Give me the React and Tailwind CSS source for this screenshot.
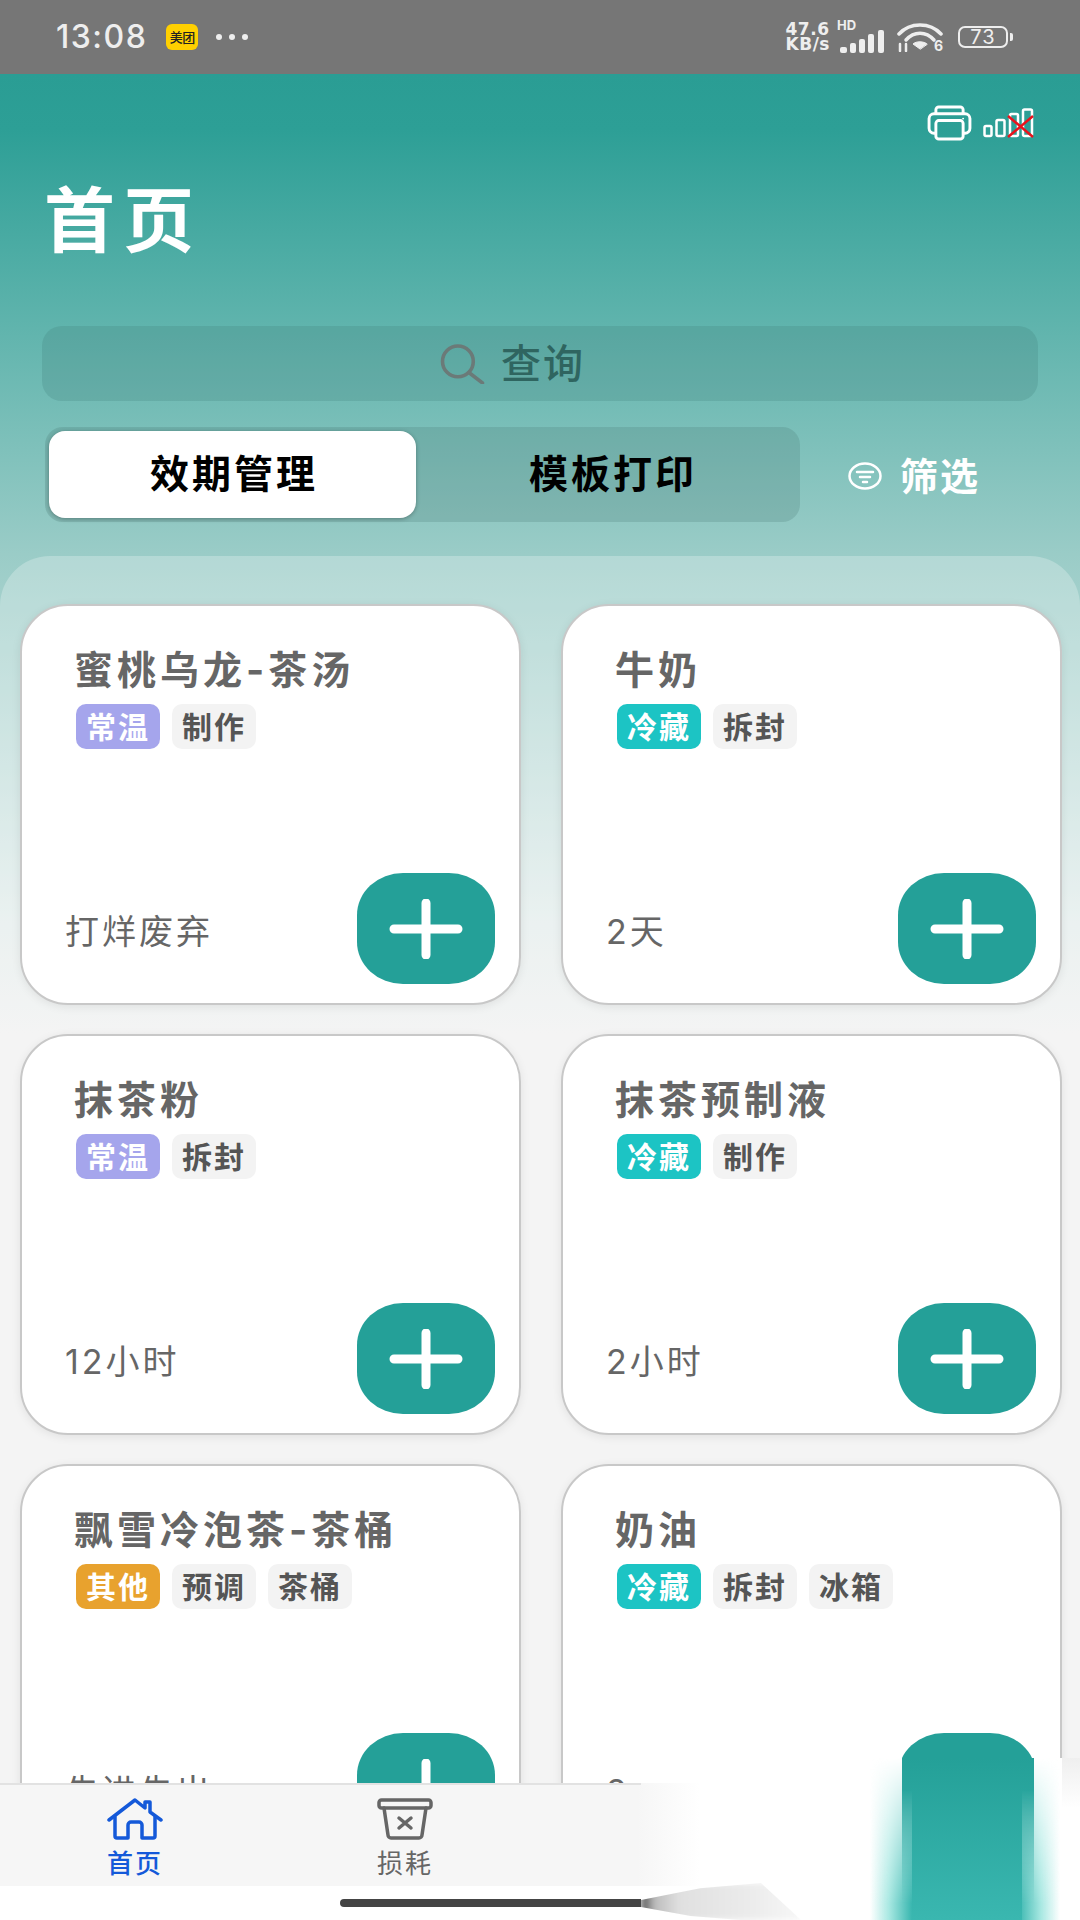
import React from 'react';

const FONT = "font-['Inter','Noto_Sans_CJK_SC',sans-serif]";

const cards = [
  { name: '蜜桃乌龙-茶汤', temp: '常温', tags: ['制作'], time: '打烊废弃' },
  { name: '牛奶', temp: '冷藏', tags: ['拆封'], time: '2天' },
  { name: '抹茶粉', temp: '常温', tags: ['拆封'], time: '12小时' },
  { name: '抹茶预制液', temp: '冷藏', tags: ['制作'], time: '2小时' },
  { name: '飘雪冷泡茶-茶桶', temp: '其他', tags: ['预调', '茶桶'], time: '先进先出' },
  { name: '奶油', temp: '冷藏', tags: ['拆封', '冰箱'], time: '2小时' },
];

const TEMP_COLORS = {
  常温: 'bg-[#a5a5ec]',
  冷藏: 'bg-[#1cc4c4]',
  其他: 'bg-[#e8a22e]',
};

function Tag({ children, className }) {
  return (
    <span className={`flex h-[45px] w-[84px] items-center justify-center rounded-[10px] text-[30px] font-bold leading-none tracking-[2px] ${className}`}>
      {children}
    </span>
  );
}

function Card({ card }) {
  return (
    <div className="flex h-[401px] w-[501px] flex-col rounded-[48px] border-2 border-[#c8c8c8] bg-white pl-[44px] pr-[24px] pt-[44px] shadow-[0_2px_10px_rgba(0,0,0,0.08)]">
      <div className="pl-[8px] text-[39px] font-bold leading-[40px] tracking-[4px] text-[#666666]">{card.name}</div>
      <div className="mt-[14px] flex gap-[12px] pl-[10px]">
        <Tag className={`text-white ${TEMP_COLORS[card.temp]}`}>{card.temp}</Tag>
        {card.tags.map((tag) => (
          <Tag key={tag} className="bg-[#f3f3f3] text-[#555555]">{tag}</Tag>
        ))}
      </div>
      <div className="mt-[124px] flex items-start justify-between">
        <span className="-ml-[1px] pt-[39px] text-[34px] leading-[40px] tracking-[3px] text-[#666666]">{card.time}</span>
        <button className="flex h-[111px] w-[138px] items-center justify-center rounded-[46px/42px] bg-[#24a098]">
          <svg width="74" height="60" viewBox="0 0 74 60" fill="none" stroke="white" strokeWidth="9" strokeLinecap="round">
            <path d="M5 30H69M37 4V56" />
          </svg>
        </button>
      </div>
    </div>
  );
}

function StatusBar() {
  return (
    <div className="flex h-[74px] items-center justify-between bg-[#767676] pl-[56px] pr-[72px] text-[#eeeeee]">
      <div className="flex items-center">
        <span className="text-[32px] font-medium leading-none tracking-[1.5px]">13:08</span>
        <span className="ml-[19px] flex h-[26px] w-[32px] items-center justify-center rounded-[6px] bg-[#ffd000] text-[13px] font-medium leading-none tracking-[-0.5px] text-[#222222]">美团</span>
        <span className="ml-[18px] flex gap-[7px]">
          <i className="h-[6px] w-[6px] rounded-full bg-[#eeeeee]" />
          <i className="h-[6px] w-[6px] rounded-full bg-[#eeeeee]" />
          <i className="h-[6px] w-[6px] rounded-full bg-[#eeeeee]" />
        </span>
      </div>
      <div className="flex items-center">
        <span className="font-['DejaVu_Sans',sans-serif] text-[17px] font-bold leading-[15px] tracking-[0.5px]">47.6<br />KB/s</span>
        <div className="relative ml-[7px] h-[30px] w-[48px]">
          <span className="absolute left-0 top-[-3px] text-[13px] font-bold leading-none">HD</span>
          <svg className="absolute bottom-[-2px] left-0" width="48" height="24" viewBox="0 0 48 24" fill="#eeeeee">
            <rect x="3" y="17" width="7" height="6" rx="2" />
            <rect x="13" y="13" width="6" height="10" rx="2" />
            <rect x="22" y="9" width="6" height="14" rx="2" />
            <rect x="31" y="4" width="6" height="19" rx="2" />
            <rect x="41" y="0" width="6" height="23" rx="2" />
          </svg>
        </div>
        <div className="relative ml-[12px] h-[30px] w-[46px]">
          <svg width="46" height="30" viewBox="0 0 46 30" fill="none" stroke="#eeeeee" strokeWidth="3.5" strokeLinecap="round">
            <path d="M2 12C13 0 33 0 44 12" />
            <path d="M9 18C17 9 29 9 37 18" />
            <path d="M23 27l-7-5c3-3 11-3 14 0z" fill="#eeeeee" strokeWidth="1" />
            <path d="M3 22v7M9 29v-7" strokeWidth="2.5" />
          </svg>
          <span className="absolute right-0 top-[17px] text-[14px] font-bold leading-none">6</span>
        </div>
        <div className="relative ml-[15px] flex h-[22px] w-[50px] items-center justify-center rounded-[7px] border-2 border-[#eeeeee] text-[20px] leading-none tracking-[1px]">
          73
          <i className="absolute right-[-7px] top-[5px] h-[8px] w-[3px] rounded-r-[2px] bg-[#eeeeee]" />
        </div>
      </div>
    </div>
  );
}

function Header() {
  return (
    <div className="relative px-[42px]">
      <div className="absolute right-[46px] top-[31px] flex items-end gap-[11px]">
        <svg width="45" height="36" viewBox="0 0 46 37" fill="none" stroke="white" strokeWidth="3" strokeLinejoin="round">
          <path d="M9 9V5a3 3 0 0 1 3-3h22a3 3 0 0 1 3 3v4" />
          <path d="M9 29H7a5 5 0 0 1-5-5V14a5 5 0 0 1 5-5h32a5 5 0 0 1 5 5v10a5 5 0 0 1-5 5h-2" />
          <rect x="9" y="16" width="28" height="19" rx="3" />
          <circle cx="37" cy="14" r="1" fill="white" stroke="none" />
        </svg>
        <div className="relative mb-[3px] h-[30px] w-[51px]">
          <svg width="51" height="30" viewBox="0 0 51 30" fill="none" stroke="white" strokeWidth="2.5">
            <rect x="1.5" y="18" width="7" height="10" rx="1.5" />
            <rect x="13.5" y="12" width="8" height="16" rx="1.5" />
            <rect x="27" y="6" width="8" height="22" rx="1.5" />
            <rect x="40" y="1.5" width="9" height="26.5" rx="1.5" />
          </svg>
          <svg className="absolute left-[24px] top-[7px]" width="27" height="23" viewBox="0 0 27 23" fill="none" stroke="#e8141c" strokeWidth="2.5">
            <path d="M1 1L26 22M26 1L1 22" />
          </svg>
        </div>
      </div>
      <h1 className="pl-[2px] pt-[108px] text-[71px] font-bold leading-[76px] tracking-[8px] text-white">首页</h1>
      <div className="mt-[68px] flex h-[75px] items-center justify-center rounded-[20px] bg-[#3f7f7a]/25 pr-[58px]">
        <svg width="50" height="41" viewBox="0 0 48 40" fill="none" stroke="#6b7a78" strokeWidth="3.5" strokeLinecap="round">
          <circle cx="20" cy="18" r="15" />
          <path d="M31 29L44 39" />
        </svg>
        <span className="ml-[14px] text-[40px] font-medium leading-none tracking-[2px] text-[#2f6560]">查询</span>
      </div>
      <div className="mt-[26px] flex items-center">
        <div className="ml-[3px] flex h-[95px] w-[755px] rounded-[18px] bg-[#4a7a76]/25 p-[4px]">
          <div className="flex w-[367px] items-center justify-center rounded-[16px] bg-white pl-[3px] text-[39px] font-bold tracking-[3px] text-black shadow-[0_1px_4px_rgba(0,0,0,0.3)]">效期管理</div>
          <div className="flex flex-1 items-center justify-center pl-[14px] text-[39px] font-bold tracking-[3px] text-black">模板打印</div>
        </div>
        <svg className="ml-[48px] mt-[3px]" width="34" height="28" viewBox="0 0 34 28" fill="none" stroke="white" strokeWidth="2.5" strokeLinecap="round">
          <ellipse cx="17" cy="14" rx="15.5" ry="12.5" />
          <path d="M9 10H25M12 15H22M15 20H19" />
        </svg>
        <span className="ml-[18px] mt-[3px] text-[38px] font-bold tracking-[2px] text-white">筛选</span>
      </div>
    </div>
  );
}

function BottomNav() {
  return (
    <div className="absolute left-0 top-[1783px] flex h-[103px] w-[700px] bg-[linear-gradient(to_right,#f6f6f6_91%,#ffffff_100%)] pt-[15px]">
      <div className="absolute left-0 top-0 h-[2px] w-[641px] bg-[#e2e2e2]" />
      <div className="flex w-[270px] flex-col items-center">
        <svg width="56" height="42" viewBox="0 0 56 42" fill="none" stroke="#1459d9" strokeWidth="3.5" strokeLinejoin="round" strokeLinecap="round">
          <path d="M2 22L28 2L38 10V4H43V14L54 22" />
          <path d="M8 19V38a2 2 0 0 0 2 2H21V27a3 3 0 0 1 3-3H32a3 3 0 0 1 3 3V40H46a2 2 0 0 0 2-2V19" />
        </svg>
        <span className="mt-[9px] text-[26px] font-medium leading-[30px] tracking-[2px] text-[#1459d9]">首页</span>
      </div>
      <div className="flex w-[270px] flex-col items-center">
        <svg width="56" height="42" viewBox="0 0 56 42" fill="none" stroke="#666666" strokeWidth="3.5" strokeLinejoin="round" strokeLinecap="round">
          <rect x="2" y="2" width="52" height="8" rx="2.5" />
          <path d="M7 10L11 37a3 3 0 0 0 3 3H42a3 3 0 0 0 3-3L49 10" />
          <path d="M22 20L34 30M34 20L22 30" />
        </svg>
        <span className="mt-[9px] text-[26px] leading-[30px] tracking-[2px] text-[#666666]">损耗</span>
      </div>
    </div>
  );
}

// the reference's lower right corner is smeared out: white, with the last button stretched down
function Smear() {
  return (
    <>
      <div className="absolute bottom-0 left-[641px] right-0 top-[1758px] bg-white" />
      <div className="absolute bottom-0 right-0 top-[1758px] w-[18px] bg-[linear-gradient(to_bottom,#efefef,#ffffff_50px)]" />
      <div className="absolute bottom-0 left-[870px] top-[1758px] w-[190px] bg-[linear-gradient(to_right,transparent,#a8e8e2_10%,#3ab7b0_22%,#3ab7b0_78%,#a8e8e2_90%,transparent)] [mask-image:linear-gradient(to_bottom,transparent,black_90%)]" />
      <div className="absolute bottom-0 left-[902px] top-[1758px] w-[132px] bg-[linear-gradient(to_bottom,#24a098,#3ab7b0)] [mask-image:linear-gradient(to_bottom,black_20%,transparent_90%)]" />
      <div className="absolute bottom-0 left-[912px] top-[1758px] w-[110px] bg-[linear-gradient(to_bottom,#24a098,#3ab7b0)]" />
      <div className="absolute bottom-0 left-0 top-[1886px] w-[641px] bg-white" />
    </>
  );
}

export default function App() {
  return (
    <div className={`relative h-[1920px] w-[1080px] overflow-hidden bg-[#f0f0f0] ${FONT}`}>
      <StatusBar />
      <div className="h-[1846px] bg-[linear-gradient(to_bottom,#2a9d94_0%,#2d9f96_3%,#9accc7_26%,#e4edec_46%,#f0f0f0_52%)]">
        <Header />
        <div className="mt-[34px] rounded-t-[50px] bg-white/25 px-[20px] pt-[48px]">
          <div className="grid grid-cols-[501px_501px] gap-x-[40px] gap-y-[29px]">
            {cards.map((card) => (
              <Card key={card.name} card={card} />
            ))}
          </div>
        </div>
      </div>

      <Smear />
      <BottomNav />
      <div className="absolute left-[340px] top-[1899px] h-[8px] w-[301px] rounded-l-full bg-[#444444]" />
      <div className="absolute left-[641px] top-[1883px] h-[37px] w-[160px] bg-[linear-gradient(to_right,#444444,#bbbbbb_8%,#e0e0e0_24%,#ececec_70%,#f7f7f7)] blur-[3px] [clip-path:polygon(0_46%,37%_14%,75%_0,100%_100%,62%_100%,31%_89%,0_65%)]" />
    </div>
  );
}
